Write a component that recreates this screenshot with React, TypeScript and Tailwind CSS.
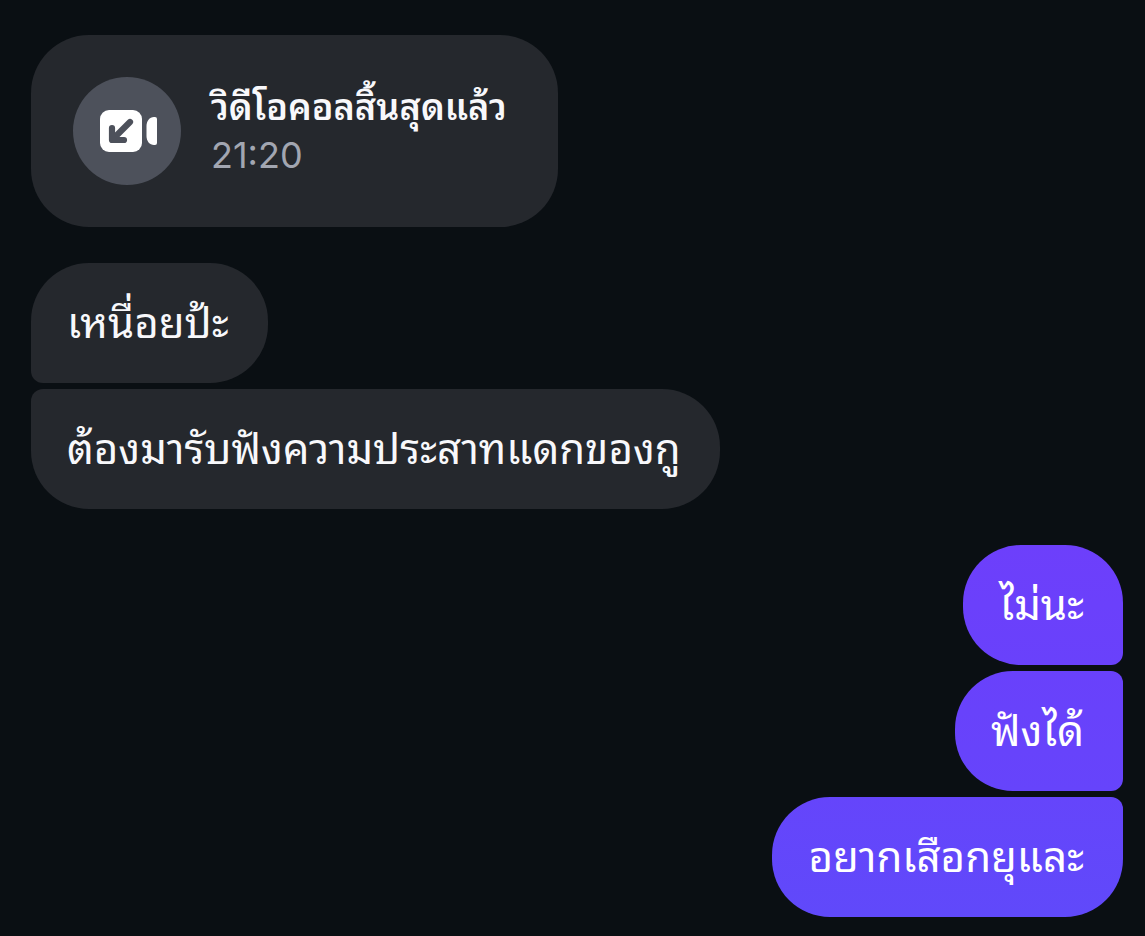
interface Message {
  text: string;
  className: string;
}

const received: Message[] = [
  { text: 'เหนื่อยป้ะ', className: 'rounded-bl-xl' },
  { text: 'ต้องมารับฟังความประสาทแดกของกู', className: 'rounded-tl-xl' },
];

const sent: Message[] = [
  { text: 'ไม่นะ', className: 'rounded-br-xl from-[#6d3ffb] to-[#6941fb]' },
  { text: 'ฟังได้', className: 'rounded-r-xl from-[#6941fb] to-[#6644fb]' },
  { text: 'อยากเสือกยุและ', className: 'rounded-tr-xl from-[#6545fb] to-[#6049fa]' },
];

function VideoCallIcon() {
  return (
    <svg width="58" height="42" viewBox="0 0 58 42" fill="none" aria-hidden="true">
      <rect width="42" height="42" rx="9" fill="white" />
      <path
        d="M30 12L13 29M12 18V30H24"
        stroke="#4d515b"
        strokeWidth="6.2"
        strokeLinecap="round"
        strokeLinejoin="round"
      />
      <path
        d="M54 7H55Q57 7 57 9V33Q57 35 55 35H54C49.5 35 46.5 31 46.5 26V16C46.5 11 49.5 7 54 7Z"
        fill="white"
      />
    </svg>
  );
}

function CallCard() {
  return (
    <div className="flex items-center gap-[30px] rounded-[58px] bg-[#25282d] py-[42px] pr-[51px] pl-[42px]">
      <div className="flex size-[108px] items-center justify-center rounded-full bg-[#4d515b] pl-1">
        <VideoCallIcon />
      </div>
      <div className="flex flex-col gap-2 pb-0.5">
        <p className="text-[36px] leading-[42px] font-semibold whitespace-nowrap">วิดีโอคอลสิ้นสุดแล้ว</p>
        <p className="font-['Inter',sans-serif] text-[36px] leading-[44px] text-[#a2a6b1]">21:20</p>
      </div>
    </div>
  );
}

export default function App() {
  return (
    <main className="flex min-h-screen flex-col gap-9 bg-[#0a0f13] pt-[35px] pr-[22px] pb-[19px] pl-[31px] font-['Thonburi','Noto_Sans_Thai_Looped','Loma','Garuda','Waree','Noto_Sans',sans-serif] text-[#f8f8fb]">
      <div className="flex">
        <CallCard />
      </div>

      <div className="flex flex-col items-start gap-1.5">
        {received.map((message) => (
          <p
            key={message.text}
            className={`rounded-[58px] bg-[#25282d] pt-[26px] pr-[39px] pb-[34px] pl-9 text-[42px] leading-[60px] ${message.className}`}
          >
            {message.text}
          </p>
        ))}
      </div>

      <div className="flex flex-col items-end gap-1.5">
        {sent.map((message) => (
          <p
            key={message.text}
            className={`rounded-[58px] bg-linear-to-b pt-[26px] pr-[39px] pb-[34px] pl-9 text-[42px] leading-[60px] text-white ${message.className}`}
          >
            {message.text}
          </p>
        ))}
      </div>
    </main>
  );
}
